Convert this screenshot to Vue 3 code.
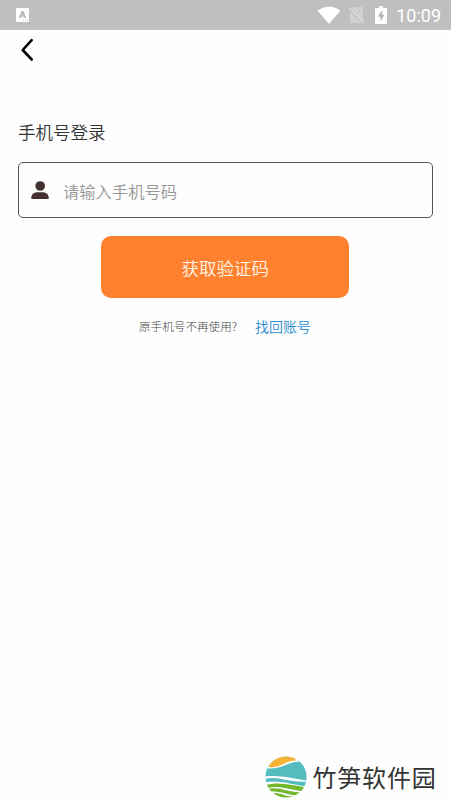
<script setup>
import { ref } from 'vue'

const phone = ref('')
</script>

<template>
  <div class="screen">
    <header class="status">
      <svg class="ime" viewBox="0 0 13 14">
        <rect width="13" height="14" rx="0.8" fill="#fff" />
        <path d="M3.6 10 6.2 3.8h.6L9.4 10M4.7 7.9h3.7" fill="none" stroke="#b5b5b5" stroke-width="1.6" />
        <path d="M7 12.3h1M9 12.3h1M11 12.3h1" stroke="#c6c6c6" />
      </svg>
      <div class="indicators">
        <svg class="wifi" viewBox="0 0 24 18">
          <path d="M.5 4.7C7-.7 17-.7 23.5 4.7L12 17.7Z" fill="#fff" />
        </svg>
        <svg class="sim" viewBox="0 0 17 18">
          <path d="M6 1h9v14.5L3.5 4Z M2 5.5 13.5 17H2Z" fill="#d0d0d0" />
          <path d="M.7 1.6 16 17" stroke="#dedede" stroke-width="1.3" />
        </svg>
        <svg class="battery" viewBox="0 0 12 18">
          <path d="M4 0h4v2h3q1 0 1 1v14q0 1-1 1H1q-1 0-1-1V3q0-1 1-1h3Z" fill="#fff" />
          <path d="M7.2 4.2 2.7 10.6h2.7v4.7l4.2-6.4H7.2Z" fill="#b5b5b5" />
        </svg>
        <span class="clock">10:09</span>
      </div>
    </header>

    <nav class="nav">
      <svg class="back" viewBox="0 0 14 24">
        <path d="M11.7 2.1 2.7 12l9 9.5" fill="none" stroke="#050505" stroke-width="2.6" stroke-linecap="round" stroke-linejoin="round" />
      </svg>
    </nav>

    <main class="login">
      <h1 class="title">手机号登录</h1>
      <label class="field">
        <svg class="person" viewBox="0 0 18 18">
          <circle cx="9.2" cy="5" r="4.8" fill="#42302f" />
          <path d="M.3 18v-1.2C.3 13.4 3 11.3 6.2 11.3h5.6c3.2 0 5.9 2.1 5.9 5.5V18Z" fill="#42302f" />
        </svg>
        <input v-model="phone" class="phone" type="tel" placeholder="请输入手机号码" />
      </label>
      <button class="submit">获取验证码</button>
      <p class="help">
        <span>原手机号不再使用?</span>
        <a class="recover">找回账号</a>
      </p>
    </main>

    <footer class="brand">
      <svg class="logo" viewBox="0 0 42 42">
        <defs>
          <clipPath id="disc"><circle cx="21" cy="21" r="20.6" /></clipPath>
        </defs>
        <g clip-path="url(#disc)">
          <rect width="42" height="42" fill="#fff" />
          <path d="M0 0H42V24.5C29 23 15 18.5 0 20.5Z" fill="#55bdc0" />
          <path d="M3 12.5C16 13.5 22 6 35 5.5L33-1H3Z" fill="#fff" />
          <path d="M4 11C16 12.5 19 4.8 31 4.6L28-1H4Z" fill="#f7b338" />
          <path d="M0 22.7C14 20 25 27 42 25.4V30.5C28 29.5 17 23.5 0 26.3Z" fill="#55bdc0" />
          <path d="M0 29.4C14 25 27 29.5 42 31.5V35.5C28 35.5 16 28.5 2 32.2Z" fill="#72b82f" />
          <path d="M2 33.2C14 29.5 25 37.5 37 36L34 39.5C24 40 15 33.8 4 36Z" fill="#72b82f" />
          <path d="M8 37.3C15 35.8 20 41 28 40.5L24 43H12Z" fill="#72b82f" />
        </g>
      </svg>
      <span class="name">竹笋软件园</span>
    </footer>
  </div>
</template>

<style>
body {
  background: #fefefe;
}
</style>

<style scoped>
.screen {
  display: flex;
  flex-direction: column;
  box-sizing: border-box;
  width: 451px;
  height: 803px;
  overflow: hidden;
  background: #fefefe;
  font-family: "Noto Sans CJK SC", sans-serif;
}
.status {
  display: flex;
  justify-content: space-between;
  align-items: center;
  box-sizing: border-box;
  height: 30px;
  padding: 0 10px 0 16px;
  background: #bfbfbf;
}
.ime {
  width: 13px;
  height: 14px;
}
.indicators {
  display: flex;
  align-items: center;
}
.wifi {
  width: 24px;
  height: 18px;
  margin-right: 7px;
}
.sim {
  width: 17px;
  height: 18px;
  margin-right: 10px;
}
.battery {
  width: 12px;
  height: 18px;
  margin-right: 9px;
}
.clock {
  color: #fff;
  font: 18px/30px Roboto, sans-serif;
  padding-top: 2px;
}
.nav {
  display: flex;
  height: 42px;
  padding: 8px 0 0 20px;
  box-sizing: border-box;
}
.back {
  width: 14px;
  height: 24px;
}
.login {
  display: flex;
  flex: 1;
  flex-direction: column;
  padding: 47px 18px 0;
}
.title {
  margin: 0;
  color: #333;
  font-size: 17.5px;
  font-weight: 350;
  line-height: 26px;
}
.field {
  display: flex;
  align-items: center;
  box-sizing: border-box;
  height: 56px;
  margin-top: 17px;
  padding: 0 12px;
  border: 1px solid #555;
  border-radius: 5px;
}
.person {
  flex: none;
  width: 18px;
  height: 18px;
}
.phone {
  flex: 1;
  min-width: 0;
  height: 40px;
  margin-left: 14px;
  padding: 1px 0 0;
  border: 0;
  outline: 0;
  background: transparent;
  font: 350 16.3px "Noto Sans CJK SC", sans-serif;
}
.phone::placeholder {
  color: #969696;
  opacity: 1;
}
.submit {
  align-self: center;
  width: 248px;
  height: 62px;
  margin: 18px 0.5px 0 0;
  padding: 1px 0 0;
  border: 0;
  border-radius: 10px;
  background: #ff802e;
  color: #fff6e8;
  font: 350 17.5px "Noto Sans CJK SC", sans-serif;
}
.help {
  display: flex;
  align-items: center;
  justify-content: center;
  gap: 18px;
  height: 24px;
  margin: 16px 1px 0 0;
  color: #484848;
  font-size: 11.6px;
  font-weight: 300;
}
.recover {
  color: #278ccf;
  font-size: 14px;
  font-weight: 350;
}
.brand {
  display: flex;
  align-items: center;
  justify-content: flex-end;
  height: 42px;
  padding: 0 14.5px 5px 0;
}
.logo {
  width: 42px;
  height: 42px;
  margin-right: 5.5px;
}
.name {
  color: #333;
  font-size: 24px;
  line-height: 36px;
  letter-spacing: 0.8px;
}
</style>
